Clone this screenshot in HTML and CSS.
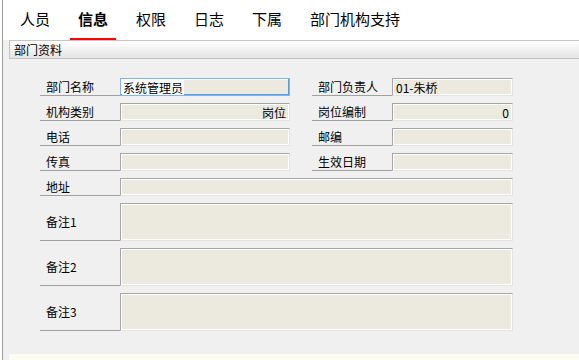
FILE: index.html
```html
<!DOCTYPE html>
<html lang="zh-CN">
<head>
    <meta charset="UTF-8">
    <title>部门资料</title>
    <link rel="stylesheet" href="styles.css">
</head>
<body>
    <div class="window">
        <div class="tabs">
            <div class="tab">人员</div>
            <div class="tab active">信息</div>
            <div class="tab">权限</div>
            <div class="tab">日志</div>
            <div class="tab">下属</div>
            <div class="tab">部门机构支持</div>
        </div>
        <div class="section-bar">部门资料</div>

        <div class="form">
            <div class="label">部门名称</div>
            <div class="field focused"><span class="sel">系统管理员</span></div>
            <div></div>
            <div class="label">部门负责人</div>
            <div class="field">01-朱桥</div>

            <div class="label">机构类别</div>
            <div class="field right">岗位</div>
            <div></div>
            <div class="label">岗位编制</div>
            <div class="field right">0</div>

            <div class="label">电话</div>
            <div class="field"></div>
            <div></div>
            <div class="label">邮编</div>
            <div class="field"></div>

            <div class="label">传真</div>
            <div class="field"></div>
            <div></div>
            <div class="label">生效日期</div>
            <div class="field"></div>

            <div class="label">地址</div>
            <div class="field wide"></div>

            <div class="label">备注1</div>
            <div class="field wide"></div>

            <div class="label">备注2</div>
            <div class="field wide"></div>

            <div class="label">备注3</div>
            <div class="field wide"></div>
        </div>

        <div class="footer"></div>
    </div>
</body>
</html>
```

FILE: styles.css
```css
body {
    margin: 0;
    background-color: #ffffff;
    font-family: "Noto Sans CJK SC", "DejaVu Sans", sans-serif;
    font-size: 12px;
    color: #000;
}
.window {
    margin-left: 2px;
    border-left: 1px solid #a0a0a0;
    height: 360px;
    background-color: #f0f0f0;
    overflow: hidden;
}
.tabs {
    display: flex;
    gap: 12px;
    height: 40px;
    padding-left: 9px;
    background-color: #ffffff;
}
.tab {
    font-size: 15px;
    line-height: 38px;
    height: 38px;
    padding: 0 8px;
    border-bottom: 2px solid transparent;
}
.tab.active {
    font-weight: bold;
    border-bottom-color: #ff0000;
}
.section-bar {
    margin-left: 6px;
    height: 17px;
    line-height: 17px;
    padding-left: 4px;
    border-top: 1px solid #c4c4c4;
    border-bottom: 1px solid #c4c4c4;
    border-left: 1px solid #c4c4c4;
    background: linear-gradient(#ffffff, #e4e4e4);
}
.form {
    display: grid;
    grid-template-columns: 80px 170px 22px 80px 121px;
    grid-template-rows: repeat(5, 18px) repeat(3, 38px);
    row-gap: 7px;
    margin: 19px 0 0 37px;
}
.label {
    display: flex;
    align-items: center;
    padding-left: 6px;
    border-bottom: 1px solid #a0a0a0;
}
.field {
    display: flex;
    align-items: center;
    padding: 0 3px;
    background-color: #ece9df;
    border-top: 1px solid #a5a5a5;
    border-left: 1px solid #a5a5a5;
    border-right: 1px solid #e3e3e3;
    border-bottom: 1px solid #e3e3e3;
    box-shadow: inset 1px 1px 0 #ffffff, inset -1px -1px 0 #ffffff;
    overflow: hidden;
    white-space: nowrap;
}
.field.right {
    justify-content: flex-end;
}
.field.wide {
    grid-column: 2 / 6;
}
.field.focused {
    border: 1px solid #7eb4ea;
    box-shadow: inset -1px -1px 0 #569de5, inset 1px 1px 0 #ffffff;
    padding-left: 1px;
}
.sel {
    background-color: #ffffff;
    padding: 0 1px;
}
.footer {
    margin: 23px 0 0 6px;
    height: 10px;
    background-color: #fcfcf0;
}
```
